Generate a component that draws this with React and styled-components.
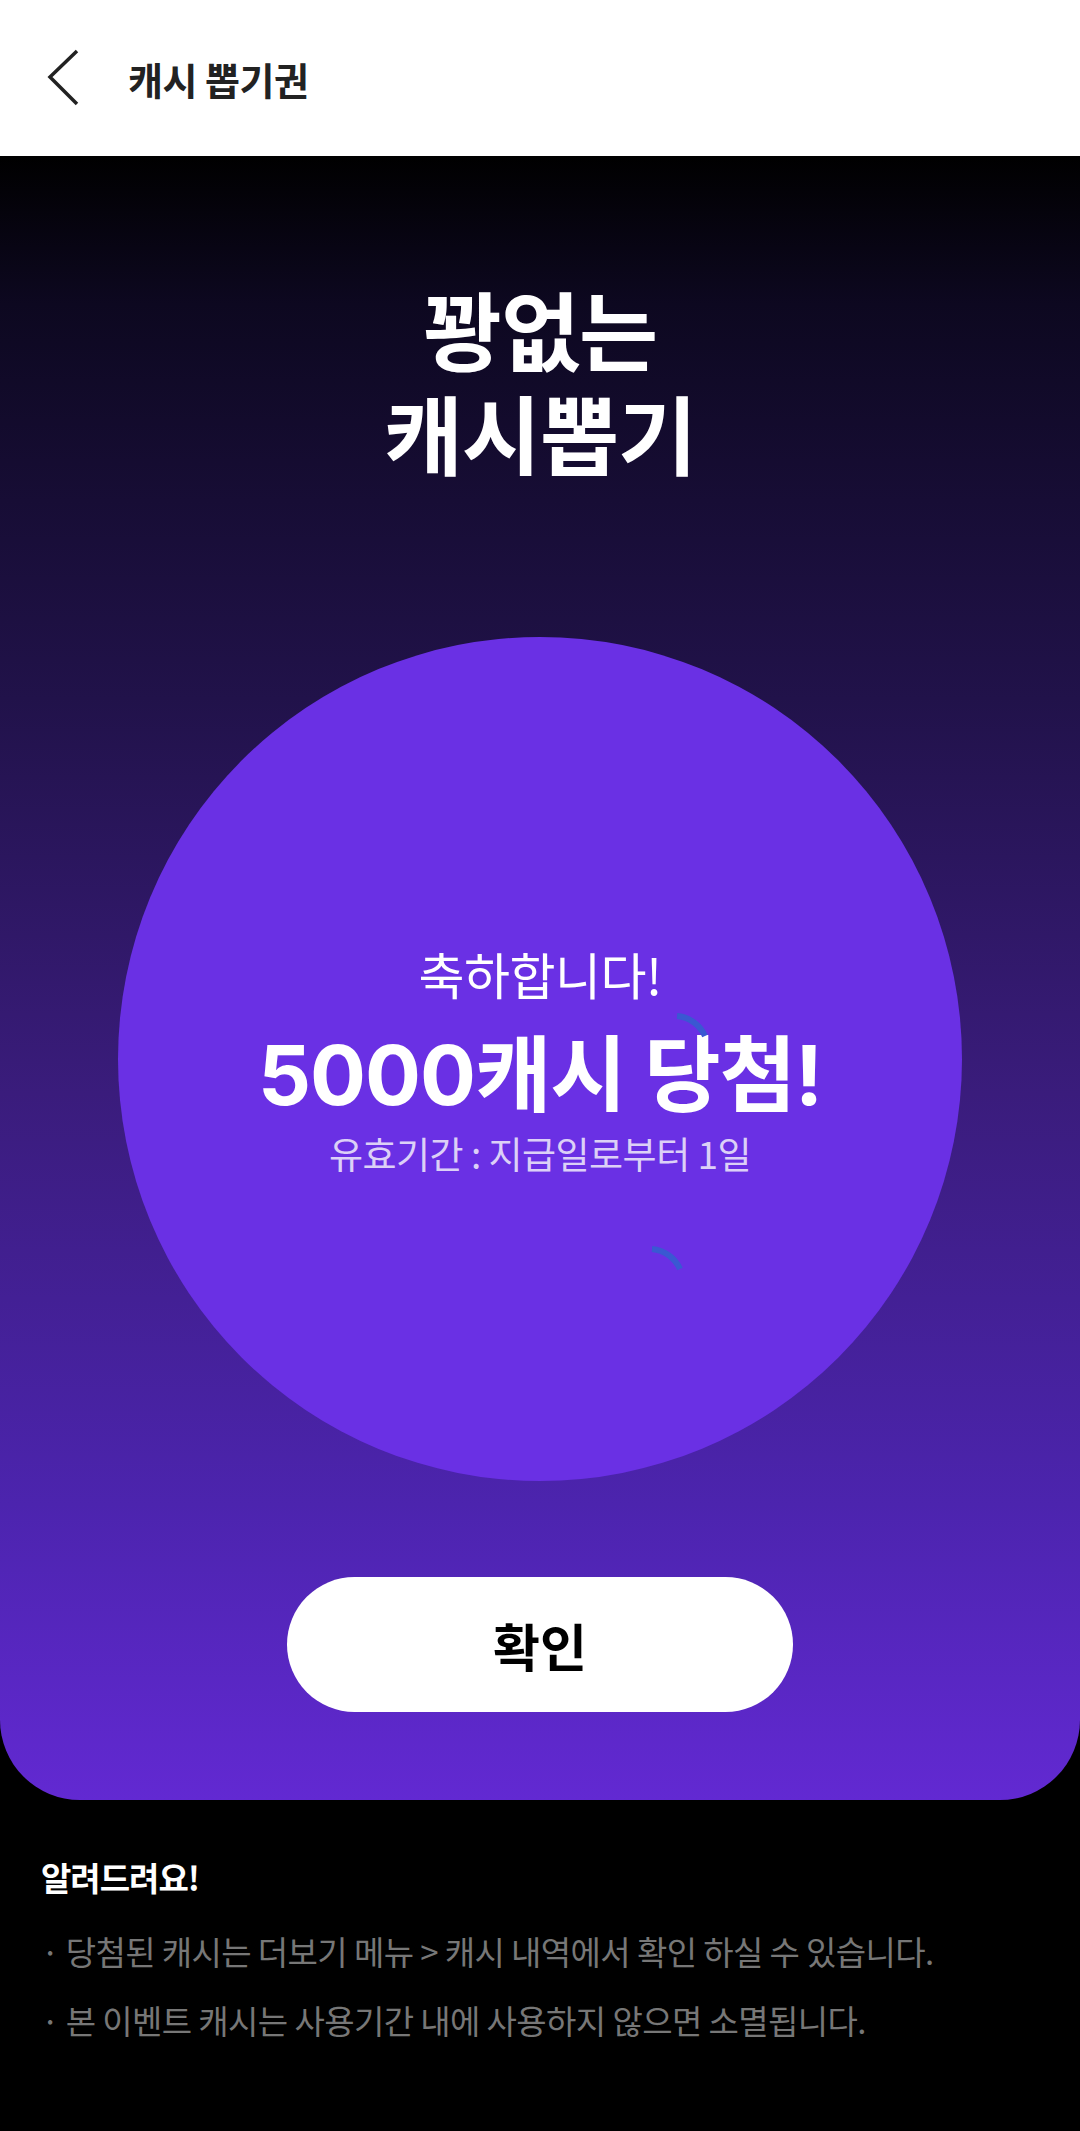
import React from "react";
import styled, { createGlobalStyle } from "styled-components";

const GlobalStyle = createGlobalStyle`
  html, body {
    margin: 0;
    padding: 0;
    background: #000;
  }
  body {
    font-family: "Noto Sans CJK KR", "Noto Sans", sans-serif;
  }
`;

const Page = styled.div`
  min-height: 100vh;
  width: 1080px;
  background: #000;
  display: flex;
  flex-direction: column;
`;

const Header = styled.header`
  height: 156px;
  background: #fff;
  display: flex;
  align-items: center;
  padding-left: 44px;
  gap: 46px;
  box-sizing: border-box;
`;

const BackButton = styled.button`
  border: 0;
  background: none;
  padding: 0;
  width: 38px;
  height: 58px;
  display: flex;
  align-items: center;
  justify-content: center;
  cursor: pointer;
`;

const HeaderTitle = styled.h1`
  margin: 0;
  font-size: 38px;
  font-weight: 700;
  color: #222;
  letter-spacing: -0.5px;
`;

const Hero = styled.section`
  background: linear-gradient(
    180deg,
    #000 0%,
    #0d0820 9%,
    #21124a 33%,
    #3a1c7c 57%,
    #4c24ae 82%,
    #6229d2 100%
  );
  border-radius: 0 0 80px 80px;
  display: flex;
  flex-direction: column;
  align-items: center;
  padding: 120px 0 88px;
`;

const HeroTitle = styled.h2`
  margin: 0;
  color: #fff;
  font-size: 86px;
  line-height: 104px;
  font-weight: 700;
  text-align: center;
  letter-spacing: -1px;
`;

const Circle = styled.div`
  position: relative;
  margin-top: 153px;
  width: 844px;
  height: 844px;
  border-radius: 50%;
  background: #6a30e4;
  display: flex;
  flex-direction: column;
  align-items: center;
  justify-content: center;
  color: #fff;
`;

const Congrats = styled.p`
  margin: 0;
  font-size: 50px;
  line-height: 60px;
  font-weight: 400;
  letter-spacing: -0.5px;
`;

const Prize = styled.p`
  margin: 24px 0 0;
  font-family: Inter, "Noto Sans CJK KR", sans-serif;
  font-size: 83px;
  line-height: 96px;
  font-weight: 700;
  letter-spacing: -1px;
`;

const Period = styled.p`
  margin: 7px 0 0;
  font-size: 37px;
  line-height: 46px;
  font-weight: 400;
  color: #dcd0f7;
  letter-spacing: -0.5px;
`;

const Spinner = styled.svg`
  position: absolute;
  left: ${({ x }) => x}px;
  top: ${({ y }) => y}px;
`;

const ConfirmButton = styled.button`
  margin-top: 96px;
  width: 506px;
  height: 135px;
  border: 0;
  border-radius: 68px;
  background: #fff;
  color: #000;
  font-family: "Noto Sans CJK KR", sans-serif;
  font-size: 51px;
  font-weight: 700;
  cursor: pointer;
`;

const Notice = styled.section`
  padding: 55px 41px 80px;
`;

const NoticeTitle = styled.h3`
  margin: 0;
  color: #fff;
  font-size: 33px;
  line-height: 44px;
  font-weight: 700;
  letter-spacing: -1px;
`;

const NoticeList = styled.ul`
  list-style: none;
  margin: 30px 0 0;
  padding: 0;
  display: flex;
  flex-direction: column;
  gap: 25px;
`;

const NoticeItem = styled.li`
  color: #777;
  font-size: 33px;
  line-height: 44px;
  letter-spacing: -0.6px;
`;

function Arc({ x, y }) {
  return (
    <Spinner x={x} y={y} width="34" height="26" viewBox="0 0 34 26">
      <path
        d="M2 3 A 34 34 0 0 1 30 23"
        fill="none"
        stroke="#3a58d2"
        strokeWidth="6"
      />
    </Spinner>
  );
}

export default function App() {
  return (
    <Page>
      <GlobalStyle />
      <Header>
        <BackButton aria-label="뒤로">
          <svg width="34" height="58" viewBox="0 0 34 58">
            <path
              d="M31 2 L4 28 L31 55"
              fill="none"
              stroke="#222"
              strokeWidth="3.5"
            />
          </svg>
        </BackButton>
        <HeaderTitle>캐시 뽑기권</HeaderTitle>
      </Header>

      <Hero>
        <HeroTitle>
          꽝없는
          <br />
          캐시뽑기
        </HeroTitle>
        <Circle>
          <Congrats>축하합니다!</Congrats>
          <Prize>5000캐시 당첨!</Prize>
          <Period>유효기간 : 지급일로부터 1일</Period>
          <Arc x={557} y={376} />
          <Arc x={532} y={609} />
        </Circle>
        <ConfirmButton>확인</ConfirmButton>
      </Hero>

      <Notice>
        <NoticeTitle>알려드려요!</NoticeTitle>
        <NoticeList>
          <NoticeItem>· 당첨된 캐시는 더보기 메뉴 &gt; 캐시 내역에서 확인 하실 수 있습니다.</NoticeItem>
          <NoticeItem>· 본 이벤트 캐시는 사용기간 내에 사용하지 않으면 소멸됩니다.</NoticeItem>
        </NoticeList>
      </Notice>
    </Page>
  );
}
